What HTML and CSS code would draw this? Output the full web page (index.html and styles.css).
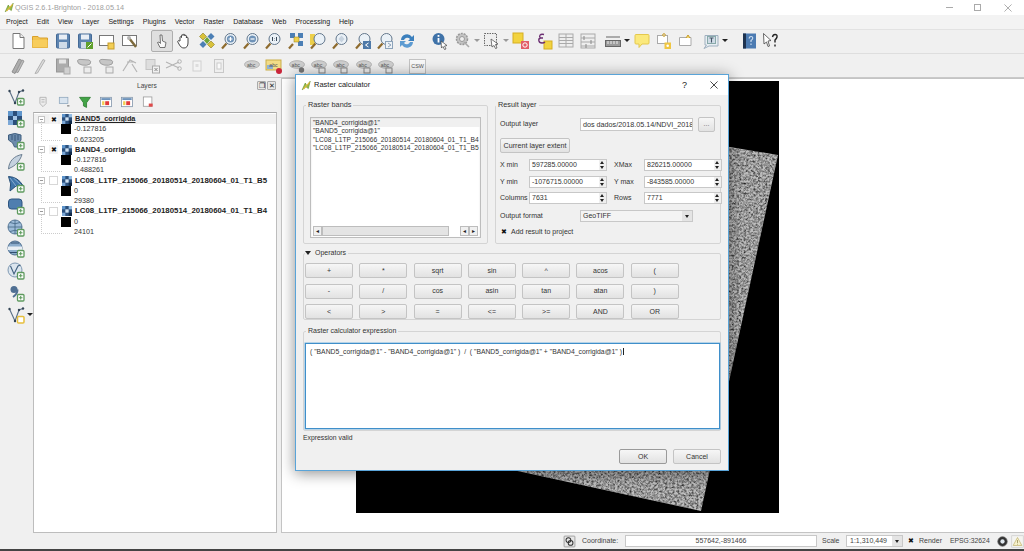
FILE: index.html
```html
<!DOCTYPE html>
<html lang="en">
<head>
<meta charset="utf-8">
<title>QGIS Raster calculator</title>
<link rel="stylesheet" href="styles.css">
</head>
<body>
<svg class="defs" width="0" height="0" aria-hidden="true">
<defs>
<filter id="grain" x="0" y="0" width="100%" height="100%" color-interpolation-filters="sRGB"><feTurbulence type="fractalNoise" baseFrequency="0.42 0.5" numOctaves="3" seed="7"/><feColorMatrix type="matrix" values="0 0 0 0 0  0 0 0 0 0  0 0 0 0 0  1.1 1.1 0 0 -0.9"/><feComposite in2="SourceGraphic" operator="in"/></filter>
<symbol id="qgis" viewBox="0 0 18 18"><path d="M2 16 L7 5 L10 10 L15 2 L12 14 L8 11 Z" fill="#9bc04a" stroke="#5d8a22"/><path d="M4 15 L14 4" stroke="#e2b93b" stroke-width="2"/></symbol>
<symbol id="new" viewBox="0 0 18 18"><path d="M4 1.5H11L15 5.5V16.5H4Z" fill="#fff" stroke="#777"/><path d="M11 1.5V5.5H15" fill="#eee" stroke="#777"/></symbol>
<symbol id="open" viewBox="0 0 18 18"><path d="M1.5 4.5H7L8.5 6H16.5V15.5H1.5Z" fill="#f3c44f" stroke="#d9a02c"/><path d="M1.5 8H16.5V15.5H1.5Z" fill="#f7cd5c"/></symbol>
<symbol id="save" viewBox="0 0 18 18"><rect x="2.5" y="2" width="13" height="14" rx="1" fill="#5d84b0" stroke="#446a96"/><rect x="5" y="2.5" width="8" height="5" fill="#e8eef5"/><rect x="5" y="10" width="8" height="6" fill="#cfdbe8"/></symbol>
<symbol id="saveas" viewBox="0 0 18 18"><use href="#save"/><rect x="10" y="10" width="7" height="7" fill="#5fa02d"/><path d="M11.5 15.5L15.5 11.5" stroke="#fff"/></symbol>
<symbol id="comp" viewBox="0 0 18 18"><rect x="1.5" y="3.5" width="14" height="10" fill="#fff" stroke="#777"/><rect x="10" y="11" width="6" height="6" fill="#f3cf56" stroke="#c69c2a"/></symbol>
<symbol id="compm" viewBox="0 0 18 18"><rect x="1.5" y="3.5" width="14" height="10" fill="#fff" stroke="#777"/><path d="M8 6L15 15" stroke="#7d6a3c" stroke-width="2.4"/><circle cx="8" cy="6" r="2" fill="#b5b5b5"/></symbol>
<symbol id="touch" viewBox="0 0 18 18"><path d="M9 3L9.5 9L13 10.5L12 15.5H7L4.5 10.5L6 10L7.5 11.5L7 3Z" fill="#f8f8f8" stroke="#555" stroke-width=".8"/></symbol>
<symbol id="hand" viewBox="0 0 18 18"><path d="M5 9V5.5C5 4.4 6.5 4.4 6.5 5.5V3.5C6.5 2.4 8 2.4 8 3.5V3C8 2 9.8 2 9.8 3V4C9.8 3 11.4 3 11.4 4V6C11.4 5 13 5 13 6V11C13 14 11.5 16 9 16C6.5 16 5.5 14.5 4.5 13L2.8 10C2.3 9 3.7 8 4.5 9Z" fill="#fff" stroke="#333" stroke-width=".9"/></symbol>
<symbol id="pansel" viewBox="0 0 18 18"><path d="M5 1L8.500 4.500L5 8L1.500 4.500Z" fill="#d9c23a" stroke="#8a7a22" stroke-width=".6"/><path d="M13 1L16.500 4.500L13 8L9.500 4.500Z" fill="#4c7fb5"/><path d="M5 9L8.500 12.500L5 16L1.500 12.500Z" fill="#4c7fb5"/><path d="M13 9L16.500 12.500L13 16L9.500 12.500Z" fill="#d9c23a" stroke="#8a7a22" stroke-width=".6"/><path d="M9 5L12 8.500L9 12L6 8.500Z" fill="#6fa53a"/></symbol>
<symbol id="mag" viewBox="0 0 18 18"><path d="M2 16.500L6.500 11.500" stroke="#8e6b2e" stroke-width="2.200"/><circle cx="10.500" cy="7" r="5.500" fill="#eaf1f7" stroke="#63778c"/></symbol>
<symbol id="zin" viewBox="0 0 18 18"><use href="#mag"/><circle cx="10.500" cy="7" r="3.600" fill="#6f93b8"/><path d="M8.500 7H12.500M10.500 5V9" stroke="#fff" stroke-width="1.200"/></symbol>
<symbol id="zout" viewBox="0 0 18 18"><use href="#mag"/><circle cx="10.500" cy="7" r="3.600" fill="#6f93b8"/><path d="M8.500 7H12.500" stroke="#fff" stroke-width="1.200"/></symbol>
<symbol id="z11" viewBox="0 0 18 18"><use href="#mag"/><path d="M8.500 5V9M12.500 5V9M10.500 6V6.400M10.500 8V8.400" stroke="#234" stroke-width=".9"/></symbol>
<symbol id="zfull" viewBox="0 0 18 18"><path d="M2 16.500L6 12" stroke="#8e6b2e" stroke-width="2.200"/><rect x="3" y="1" width="5" height="5" fill="#4c7fb5"/><rect x="11" y="1" width="5" height="5" fill="#4c7fb5"/><rect x="11" y="9" width="5" height="5" fill="#4c7fb5"/><rect x="7" y="5" width="5" height="5" fill="#f0d24b" stroke="#917a20" stroke-width=".5"/></symbol>
<symbol id="zsel" viewBox="0 0 18 18"><rect x="1" y="2" width="5" height="11" fill="#eccf4b"/><use href="#mag"/></symbol>
<symbol id="zlay" viewBox="0 0 18 18"><use href="#mag"/><path d="M7.500 7L10.500 3.500L13.500 7L10.500 10.500Z" fill="#c7d3df"/></symbol>
<symbol id="zlast" viewBox="0 0 18 18"><use href="#mag"/><rect x="9" y="9" width="8" height="8" fill="#4e79a8"/><path d="M14.500 11L11.500 13L14.500 15" fill="none" stroke="#fff"/></symbol>
<symbol id="znext" viewBox="0 0 18 18"><use href="#mag"/><rect x="9.500" y="9.500" width="7" height="7" fill="#eef2f6" stroke="#8ca3ba"/><path d="M12 11L15 13L12 15" fill="none" stroke="#8ca3ba"/></symbol>
<symbol id="refresh" viewBox="0 0 18 18"><path d="M3 8A6 6 0 0 1 14 5L16 3V9H10L12 7A3.500 3.500 0 0 0 6 8Z" fill="#3c80bd"/><path d="M15 10A6 6 0 0 1 4 13L2 15V9H8L6 11A3.500 3.500 0 0 0 12 10Z" fill="#5d9bd1"/></symbol>
<symbol id="ident" viewBox="0 0 18 18"><circle cx="7.500" cy="7" r="6" fill="#3f72a8"/><rect x="6.600" y="6" width="1.800" height="4.500" fill="#fff"/><rect x="6.600" y="3" width="1.800" height="1.800" fill="#fff"/><path d="M10 9L16 13.500L13.500 14L15 17L13.500 17.500L12 14.500L10.500 16Z" fill="#fff" stroke="#444" stroke-width=".7"/></symbol>
<symbol id="gear" viewBox="0 0 18 18"><circle cx="8" cy="7" r="5.500" fill="#c4c4c4" stroke="#999" stroke-width="1.500" stroke-dasharray="2 1"/><circle cx="8" cy="7" r="2.500" fill="#efefef" stroke="#999"/><path d="M10 10L15 15" stroke="#aaa" stroke-width="1.600"/></symbol>
<symbol id="selbox" viewBox="0 0 18 18"><rect x="1.500" y="1.500" width="12" height="12" fill="#eee" stroke="#666" stroke-dasharray="1.500 1"/><path d="M8 7L15 12L12.500 12.500L14 16L12.500 16.500L11 13.500L9 15Z" fill="#fff" stroke="#444" stroke-width=".7"/></symbol>
<symbol id="desel" viewBox="0 0 18 18"><rect x="1" y="1" width="10" height="10" fill="#f2d33f" stroke="#d6ae22"/><rect x="9" y="9" width="8" height="8" fill="#e25c66"/><circle cx="13" cy="13" r="2.200" fill="none" stroke="#fff"/></symbol>
<symbol id="eps" viewBox="0 0 18 18"><rect x="9" y="9" width="8" height="8" fill="#f2d33f" stroke="#d6ae22"/><path d="M9 2.500C5 1.500 3.500 4 5.500 6C3 6.500 3 11 7 11C8.500 11 9.500 10.500 10 10M5.500 6H8" fill="none" stroke="#6b2e72" stroke-width="1.300"/></symbol>
<symbol id="table" viewBox="0 0 18 18"><rect x="2" y="2" width="14" height="13" fill="#eee" stroke="#aaa"/><path d="M2 5.500H16M9 2V15M2 8.500H16M2 11.500H16" stroke="#aaa"/></symbol>
<symbol id="stats" viewBox="0 0 18 18"><rect x="2" y="2" width="14" height="14" fill="#eee" stroke="#aaa"/><path d="M2 6H16M2 10H16M2 14H16" stroke="#aaa"/><path d="M5 4V8M12 8V12M7 12V16" stroke="#888"/></symbol>
<symbol id="ruler" viewBox="0 0 18 18"><path d="M2 5H16" stroke="#666"/><rect x="1.500" y="8.500" width="15" height="6" fill="#9a9a9a" stroke="#666"/><path d="M4 9V12M7 9V12M10 9V12M13 9V12" stroke="#eee"/></symbol>
<symbol id="tip" viewBox="0 0 18 18"><path d="M2 3.500Q2 2.500 3 2.500H15Q16 2.500 16 3.500V11Q16 12 15 12H9L6 15.500V12H3Q2 12 2 11Z" fill="#fbe97c" stroke="#e4c84d"/></symbol>
<symbol id="anno1" viewBox="0 0 18 18"><rect x="2.500" y="3.500" width="10" height="8" fill="#fff" stroke="#aaa"/><circle cx="9" cy="3" r="1.300" fill="#eee" stroke="#c79d2a"/><rect x="9.500" y="10.500" width="6.500" height="6.500" fill="#efc642"/><circle cx="12.700" cy="13.700" r="1.300" fill="#fff"/></symbol>
<symbol id="anno2" viewBox="0 0 18 18"><path d="M2.500 5.500H14V13.500H2.500Z" fill="#fff" stroke="#aaa"/><path d="M9 6L11 3L13 6" fill="#f3d672" stroke="#c79d2a"/></symbol>
<symbol id="textann" viewBox="0 0 18 18"><path d="M3 3.500H16V14H7L2 16.500L4.500 13H3Z" fill="#e8eef3" stroke="#9fb0bf"/><rect x="5.500" y="4.500" width="8" height="7" fill="#cfdbe6" stroke="#8aa"/><path d="M7.500 6H11.500M9.500 6V10.500" stroke="#456" stroke-width="1.100"/></symbol>
<symbol id="help" viewBox="0 0 18 18"><rect x="3" y="1.500" width="13" height="15" fill="#4c7bb2"/><rect x="3" y="1.500" width="3" height="15" fill="#1e3350"/><path d="M9 6.500Q9.500 4.500 11 4.500Q13 4.500 12.700 6.500Q12.500 7.500 11 8.500V10M11 11.500V13" fill="none" stroke="#cfe0f3" stroke-width="1.100"/></symbol>
<symbol id="whats" viewBox="0 0 18 18"><path d="M1.500 1.500L9 8.500L6 9L7.500 14L6 14.500L4.500 10L2 12Z" fill="#fff" stroke="#444" stroke-width=".8"/><path d="M10.500 5Q11 2.500 13 2.500Q15.500 2.500 15 5Q14.700 6.500 13 8V10.500M13 12.500V14.500" fill="none" stroke="#222" stroke-width="1.400"/></symbol>
<symbol id="pencils" viewBox="0 0 18 18"><path d="M3 15L10 2L13 3.500L6 16.500Z" fill="#adadad" stroke="#8f8f8f"/><path d="M7 15L13 3L15 4L9 15.500Z" fill="#bdbdbd" stroke="#999"/></symbol>
<symbol id="pencil" viewBox="0 0 18 18"><path d="M4 16.500L12 2.500L14 3.500L6.500 16Z" fill="#dcdcdc" stroke="#b2b2b2"/></symbol>
<symbol id="gsave" viewBox="0 0 18 18"><rect x="2.500" y="2" width="12" height="13" fill="#acacac" stroke="#979797"/><rect x="5" y="2.500" width="7" height="4" fill="#e4e4e4"/><rect x="10" y="10" width="6" height="7" fill="#d0d0d0" stroke="#aaa"/></symbol>
<symbol id="cloud1" viewBox="0 0 18 18"><path d="M1.500 4Q1.500 2 6 2.500L13 3Q16 4 14 7Q11 9 6 8Q1.500 7 1.500 4Z" fill="#c6c6c6" stroke="#a0a0a0"/><rect x="8" y="10" width="7" height="6" fill="#ececec" stroke="#aaa"/></symbol>
<symbol id="wrench" viewBox="0 0 18 18"><path d="M2 14L9 3L15 6M6 5H13M11 7L16 15" fill="none" stroke="#b5b5b5" stroke-width="1.200"/></symbol>
<symbol id="gdel" viewBox="0 0 18 18"><rect x="3" y="2.500" width="9" height="10" fill="#dedede" stroke="#c4c4c4"/><rect x="9.500" y="9" width="7" height="7" fill="#f1f1f1" stroke="#aaa"/><path d="M11.500 11L14.500 14M14.500 11L11.500 14" stroke="#888"/></symbol>
<symbol id="scis" viewBox="0 0 18 18"><path d="M1 5L14 11M1 11L14 5" stroke="#b3b3b3" stroke-width="1.100"/><circle cx="14.500" cy="4.500" r="1.800" fill="none" stroke="#b3b3b3"/><circle cx="14.500" cy="11.500" r="1.800" fill="none" stroke="#b3b3b3"/></symbol>
<symbol id="copy" viewBox="0 0 18 18"><rect x="5" y="4" width="8" height="10" fill="#f3f3f3" stroke="#d0d0d0"/><rect x="7.500" y="7" width="3" height="3" fill="#ddd"/></symbol>
<symbol id="paste" viewBox="0 0 18 18"><rect x="4.500" y="2.500" width="9" height="13" fill="#efefef" stroke="#c8c8c8"/><rect x="7" y="6" width="4" height="6" fill="#fafafa" stroke="#ccc"/></symbol>
<symbol id="abc" viewBox="0 0 18 18"><ellipse cx="9" cy="7.500" rx="7.500" ry="3.800" fill="#cfcfcf" stroke="#b5b5b5"/></symbol>
<symbol id="abcy" viewBox="0 0 18 18"><rect x="1" y="3" width="15" height="10" fill="#f2dc87" stroke="#c9ad48"/><rect x="2" y="8" width="6" height="4" fill="#8fb2d3"/><circle cx="14" cy="14" r="3" fill="#c9253a"/></symbol>
<symbol id="abcg" viewBox="0 0 18 18"><use href="#abc"/><circle cx="13.500" cy="13" r="2.700" fill="#777"/></symbol>
<symbol id="abcb" viewBox="0 0 18 18"><use href="#abc"/><rect x="9" y="11" width="6" height="5" fill="#eee" stroke="#888"/></symbol>
<symbol id="vedit" viewBox="0 0 18 18"><path d="M2.500 3L8 15L12 4L16 2.500" fill="none" stroke="#5a6f86" stroke-width="1.100"/><circle cx="2.500" cy="3" r="1.200" fill="#345"/><circle cx="8" cy="15" r="1.200" fill="#345"/><circle cx="12" cy="4" r="1.200" fill="#345"/><circle cx="16" cy="2.500" r="1.200" fill="#345"/></symbol>
<symbol id="plus" viewBox="0 0 18 18"><rect x="10.500" y="10.500" width="6.500" height="6.500" rx="1" fill="#fff" stroke="#5e9a5e" stroke-width="1.300"/><path d="M12 13.700H15.500M13.700 12V15.500" stroke="#5e9a5e" stroke-width="1.100"/></symbol>
<symbol id="lvec" viewBox="0 0 18 18"><use href="#vedit"/><use href="#plus"/></symbol>
<symbol id="lras" viewBox="0 0 18 18"><rect x="1" y="1" width="14" height="14" fill="#2b4f7b"/><rect x="1" y="1" width="5" height="5" fill="#5f95cb"/><rect x="10" y="1" width="5" height="5" fill="#5f95cb"/><rect x="6" y="6" width="4" height="4" fill="#a8c8e8"/><rect x="1" y="10" width="5" height="5" fill="#7ba7d6"/><rect x="10" y="10" width="5" height="5" fill="#122a48"/><use href="#plus"/></symbol>
<symbol id="lpg" viewBox="0 0 18 18"><path d="M1.500 3Q8 0 14 3V8Q12 10 10.500 15H7.500Q6.500 10 1.500 8Z" fill="#6c8bab" stroke="#3f5e7f"/><path d="M5 3V8M8 3V9M11 3V8" stroke="#2f4d6e" stroke-width=".8"/><use href="#plus"/></symbol>
<symbol id="lsp" viewBox="0 0 18 18"><path d="M1.500 16C2 8 7 3 15 1.500C13 8 8 13 3 15Z" fill="#c5d2df" stroke="#6c7f92"/><use href="#plus"/></symbol>
<symbol id="lms" viewBox="0 0 18 18"><path d="M1.500 1.500Q11 2 15.500 10L9 11L3 16Q5 9 1.500 1.500Z" fill="#3f75aa" stroke="#254d77"/><path d="M3 3L9 11M6.500 3L14 10" stroke="#a7c4df" stroke-width=".7"/><use href="#plus"/></symbol>
<symbol id="lmem" viewBox="0 0 18 18"><path d="M1.500 5Q1.500 2 4.500 2H12Q15 2 15 5V9Q15 12 12 12H4.500Q1.500 12 1.500 9Z" fill="#4f7eaf" stroke="#2e5580"/><use href="#plus"/></symbol>
<symbol id="lglobe" viewBox="0 0 18 18"><circle cx="8" cy="8" r="7" fill="#9dbbd8" stroke="#587897"/><path d="M1 8H15M8 1V15M3 3.500Q8 6 13 3.500M3 12.500Q8 10 13 12.500" fill="none" stroke="#416584" stroke-width=".8"/><use href="#plus"/></symbol>
<symbol id="lglobe2" viewBox="0 0 18 18"><circle cx="8" cy="8" r="7" fill="#8baccc" stroke="#4a6b8c"/><rect x="1" y="6.500" width="14" height="3.500" fill="#e8eef4"/><path d="M4 3H12M3 12.500H13" stroke="#2f4d6e"/><use href="#plus"/></symbol>
<symbol id="lwfs" viewBox="0 0 18 18"><circle cx="8" cy="8" r="7" fill="#dbe5ee" stroke="#7f99b2"/><path d="M3.500 4L7 12L11 4L13.500 3" fill="none" stroke="#40607f" stroke-width="1.100"/><use href="#plus"/></symbol>
<symbol id="lquote" viewBox="0 0 18 18"><circle cx="7" cy="5.500" r="3.500" fill="#4f6f93"/><path d="M10.500 5.500Q10.500 10 6 13" fill="none" stroke="#4f6f93" stroke-width="2"/><use href="#plus"/></symbol>
<symbol id="lnew" viewBox="0 0 18 18"><use href="#vedit"/><rect x="10.500" y="10.500" width="6.500" height="6.500" rx="1" fill="#fff" stroke="#e6bf3d" stroke-width="1.500"/></symbol>
<symbol id="paddle" viewBox="0 0 18 18"><path d="M5 3H13V11L9 15L5 11Z" fill="#ececec" stroke="#aaa"/><path d="M7 6H11M7 9H11" stroke="#aaa"/></symbol>
<symbol id="lstyle" viewBox="0 0 18 18"><rect x="3" y="3" width="11" height="8" fill="#d9e4ef" stroke="#8fa7bd"/><path d="M13 14L16 14" stroke="#333"/></symbol>
<symbol id="filter" viewBox="0 0 18 18"><path d="M2 3H16L11 10V16L7 14V10Z" fill="#43a447" stroke="#2a7a2e"/></symbol>
<symbol id="lexp" viewBox="0 0 18 18"><rect x="2" y="3" width="14" height="12" fill="#fff" stroke="#7f93a8"/><rect x="3" y="4" width="12" height="2.500" fill="#6d93bb"/><rect x="8" y="8" width="5" height="5" fill="#e23a3a"/><rect x="4" y="8" width="3" height="5" fill="#f2cc52"/></symbol>
<symbol id="lrem" viewBox="0 0 18 18"><rect x="3" y="2.500" width="11" height="12" fill="#fff" stroke="#999"/><rect x="10" y="11" width="5" height="4" fill="#e04b4b"/></symbol>
<symbol id="cog" viewBox="0 0 18 18"><circle cx="9" cy="9" r="6.500" fill="#333" stroke="#555"/><circle cx="9" cy="9" r="3" fill="#dfe7ee"/></symbol>
<symbol id="warn" viewBox="0 0 18 18"><rect x="1" y="1" width="16" height="16" fill="#f4f4f0" stroke="#ccc"/><path d="M9 3.500L15 14.500H3Z" fill="#f6f1cd" stroke="#c2b36b"/><path d="M9 7V11M9 12.200V13.200" stroke="#8a7f45"/></symbol>
<symbol id="cursor" viewBox="0 0 18 18"><rect x="1.500" y="1.500" width="15" height="15" rx="1" fill="#e7e7e7" stroke="#888"/><circle cx="7.500" cy="7" r="3.300" fill="none" stroke="#333" stroke-width="1.400"/><circle cx="10.500" cy="11" r="3.300" fill="none" stroke="#333" stroke-width="1.400"/></symbol>
<symbol id="lthumb" viewBox="0 0 18 18"><rect width="18" height="18" fill="#2b4f7b"/><rect width="6" height="6" fill="#5f95cb"/><rect x="12" width="6" height="6" fill="#94bde3"/><rect x="6" y="6" width="6" height="6" fill="#cfe2f3"/><rect y="12" width="6" height="6" fill="#7ba7d6"/><rect x="12" y="12" width="6" height="6" fill="#122a48"/></symbol>
</defs>
</svg>

<div class="app">
  <header class="titlebar">
    <svg class="ico title-ico"><use href="#qgis"/></svg>
    <span class="title-text">QGIS 2.6.1-Brighton - 2018.05.14</span>
    <div class="winctl">
      <span class="win-min"></span>
      <span class="win-max"></span>
      <svg class="win-x" viewBox="0 0 9 9"><path d="M.5.5L8.500 8.500M8.500.5L.5 8.500" stroke="#a5a5a5"/></svg>
    </div>
  </header>

  <nav class="menubar">
    <span>Project</span><span>Edit</span><span>View</span><span>Layer</span><span>Settings</span><span>Plugins</span><span>Vector</span><span>Raster</span><span>Database</span><span>Web</span><span>Processing</span><span>Help</span>
  </nav>

  <div class="toolbar">
    <span class="tb"><svg class="ico"><use href="#new"/></svg></span>
    <span class="tb"><svg class="ico"><use href="#open"/></svg></span>
    <span class="tb"><svg class="ico"><use href="#save"/></svg></span>
    <span class="tb"><svg class="ico"><use href="#saveas"/></svg></span>
    <span class="tb"><svg class="ico"><use href="#comp"/></svg></span>
    <span class="tb"><svg class="ico"><use href="#compm"/></svg></span>
    <span class="sp10"></span>
    <span class="tb active"><svg class="ico"><use href="#touch"/></svg></span>
    <span class="tb"><svg class="ico"><use href="#hand"/></svg></span>
    <span class="tb"><svg class="ico"><use href="#pansel"/></svg></span>
    <span class="tb"><svg class="ico"><use href="#zin"/></svg></span>
    <span class="tb"><svg class="ico"><use href="#zout"/></svg></span>
    <span class="tb"><svg class="ico"><use href="#z11"/></svg></span>
    <span class="tb"><svg class="ico"><use href="#zfull"/></svg></span>
    <span class="tb"><svg class="ico"><use href="#zsel"/></svg></span>
    <span class="tb"><svg class="ico"><use href="#zlay"/></svg></span>
    <span class="tb"><svg class="ico"><use href="#zlast"/></svg></span>
    <span class="tb"><svg class="ico"><use href="#znext"/></svg></span>
    <span class="tb"><svg class="ico"><use href="#refresh"/></svg></span>
    <span class="sep"></span>
    <span class="tb"><svg class="ico"><use href="#ident"/></svg></span>
    <span class="tb"><svg class="ico"><use href="#gear"/></svg></span><span class="arrow gray"></span>
    <span class="tb"><svg class="ico"><use href="#selbox"/></svg></span><span class="arrow gray"></span>
    <span class="tb"><svg class="ico"><use href="#desel"/></svg></span>
    <span class="tb"><svg class="ico"><use href="#eps"/></svg></span>
    <span class="tb"><svg class="ico"><use href="#table"/></svg></span>
    <span class="tb"><svg class="ico"><use href="#stats"/></svg></span>
    <span class="sp2"></span>
    <span class="tb"><svg class="ico"><use href="#ruler"/></svg></span><span class="arrow"></span>
    <span class="tb"><svg class="ico"><use href="#tip"/></svg></span>
    <span class="tb"><svg class="ico"><use href="#anno1"/></svg></span>
    <span class="tb"><svg class="ico"><use href="#anno2"/></svg></span>
    <span class="sp2"></span>
    <span class="tb"><svg class="ico"><use href="#textann"/></svg></span><span class="arrow"></span>
    <span class="sep sep-short"></span>
    <span class="tb"><svg class="ico"><use href="#help"/></svg></span>
    <span class="tb"><svg class="ico"><use href="#whats"/></svg></span>
  </div>

  <div class="toolbar toolbar-b">
    <span class="tb"><svg class="ico"><use href="#pencils"/></svg></span>
    <span class="tb"><svg class="ico"><use href="#pencil"/></svg></span>
    <span class="tb"><svg class="ico"><use href="#gsave"/></svg></span>
    <span class="tb"><svg class="ico"><use href="#cloud1"/></svg></span>
    <span class="tb"><svg class="ico"><use href="#cloud1"/></svg></span>
    <span class="tb"><svg class="ico"><use href="#wrench"/></svg></span>
    <span class="tb"><svg class="ico"><use href="#gdel"/></svg></span>
    <span class="tb"><svg class="ico"><use href="#scis"/></svg></span>
    <span class="tb"><svg class="ico"><use href="#copy"/></svg></span>
    <span class="tb"><svg class="ico"><use href="#paste"/></svg></span>
    <span class="sep"></span>
    <span class="tb lbl"><svg class="ico"><use href="#abc"/></svg><em>abc</em></span>
    <span class="tb lbl"><svg class="ico"><use href="#abcy"/></svg><em>abc</em></span>
    <span class="tb lbl"><svg class="ico"><use href="#abcg"/></svg><em>abc</em></span>
    <span class="tb lbl"><svg class="ico"><use href="#abcb"/></svg><em>abc</em></span>
    <span class="tb lbl"><svg class="ico"><use href="#abcb"/></svg><em>abc</em></span>
    <span class="tb lbl"><svg class="ico"><use href="#abcb"/></svg><em>abc</em></span>
    <span class="tb lbl"><svg class="ico"><use href="#abcb"/></svg><em>abc</em></span>
    <span class="sep"></span>
    <span class="csw">CSW</span>
  </div>

  <main class="workspace">
    <aside class="lefttools">
      <svg class="ico lt"><use href="#lvec"/></svg>
      <svg class="ico lt"><use href="#lras"/></svg>
      <svg class="ico lt"><use href="#lpg"/></svg>
      <svg class="ico lt"><use href="#lsp"/></svg>
      <svg class="ico lt"><use href="#lms"/></svg>
      <svg class="ico lt"><use href="#lmem"/></svg>
      <svg class="ico lt"><use href="#lglobe"/></svg>
      <svg class="ico lt"><use href="#lglobe2"/></svg>
      <svg class="ico lt"><use href="#lwfs"/></svg>
      <svg class="ico lt"><use href="#lquote"/></svg>
      <div class="lt-last"><svg class="ico lt"><use href="#lnew"/></svg><span class="arrow"></span></div>
    </aside>

    <section class="layers">
      <div class="layers-head">
        <span class="layers-title">Layers</span>
        <span class="dockbtn">&#10064;</span><span class="dockbtn">&#10005;</span>
      </div>
      <div class="layers-tools">
        <svg class="ico lti"><use href="#paddle"/></svg>
        <svg class="ico lti"><use href="#lstyle"/></svg>
        <svg class="ico lti"><use href="#filter"/></svg>
        <svg class="ico lti"><use href="#lexp"/></svg>
        <svg class="ico lti"><use href="#lexp"/></svg>
        <svg class="ico lti"><use href="#lrem"/></svg>
      </div>
      <div class="tree">
        <div class="layer current">
          <div class="lrow"><i class="exp"></i><i class="chk on">&#10006;</i><svg class="thumb"><use href="#lthumb"/></svg><b class="uline">BAND5_corrigida</b></div>
          <div class="lleg"><i class="swatch"></i><div class="vals"><span>-0.127816</span><span>0.623205</span></div></div>
        </div>
        <div class="layer">
          <div class="lrow"><i class="exp"></i><i class="chk on">&#10006;</i><svg class="thumb"><use href="#lthumb"/></svg><b>BAND4_corrigida</b></div>
          <div class="lleg"><i class="swatch"></i><div class="vals"><span>-0.127816</span><span>0.488261</span></div></div>
        </div>
        <div class="layer">
          <div class="lrow"><i class="exp"></i><i class="chk"></i><svg class="thumb"><use href="#lthumb"/></svg><b class="long">LC08_L1TP_215066_20180514_20180604_01_T1_B5</b></div>
          <div class="lleg"><i class="swatch"></i><div class="vals"><span>0</span><span>29380</span></div></div>
        </div>
        <div class="layer">
          <div class="lrow"><i class="exp"></i><i class="chk"></i><svg class="thumb"><use href="#lthumb"/></svg><b class="long">LC08_L1TP_215066_20180514_20180604_01_T1_B4</b></div>
          <div class="lleg"><i class="swatch"></i><div class="vals"><span>0</span><span>24101</span></div></div>
        </div>
      </div>
    </section>

    <section class="map">
      <svg class="raster" viewBox="0 0 423 432">
        <rect width="423" height="432" fill="#000"/>
        <polygon points="0,8 374,66 422,74 345,430 166,391 0,355" fill="#bdbdbd"/>
        <polygon points="0,8 374,66 422,74 345,430 166,391 0,355" fill="#111" filter="url(#grain)"/>
      </svg>
    </section>
  </main>

  <footer class="statusbar">
    <svg class="ico st-ico"><use href="#cursor"/></svg>
    <span class="st-coord">Coordinate:</span>
    <span class="st-input">557642,-891466</span>
    <span class="st-scale">Scale</span>
    <span class="st-combo"><span>1:1,310,449</span><i class="arrow-box"></i></span>
    <i class="st-chk">&#10006;</i>
    <span class="st-render">Render</span>
    <span class="st-epsg">EPSG:32624</span>
    <svg class="ico st-ico"><use href="#cog"/></svg>
    <svg class="ico st-ico st-warn"><use href="#warn"/></svg>
  </footer>

  <div class="dialog" role="dialog" aria-label="Raster calculator">
    <div class="dlg-title">
      <svg class="ico dlg-ico"><use href="#qgis"/></svg>
      <span class="dlg-name">Raster calculator</span>
      <span class="dlg-q">?</span>
      <svg class="dlg-x" viewBox="0 0 9 9"><path d="M.5.5L8.500 8.500M8.500.5L.5 8.500" stroke="#333"/></svg>
    </div>
    <div class="dlg-body">
      <div class="dlg-top">
        <fieldset class="group g-bands">
          <legend>Raster bands</legend>
          <div class="bands">
            <div class="bands-list">
              <span class="sel">"BAND4_corrigida@1"</span>
              <span>"BAND5_corrigida@1"</span>
              <span>"LC08_L1TP_215066_20180514_20180604_01_T1_B4</span>
              <span>"LC08_L1TP_215066_20180514_20180604_01_T1_B5</span>
            </div>
            <div class="hscroll">
              <i class="sb-btn">&#9666;</i>
              <i class="sb-thumb"></i>
              <i class="sb-btn">&#9666;</i><i class="sb-btn">&#9656;</i>
            </div>
          </div>
        </fieldset>
        <fieldset class="group g-result">
          <legend>Result layer</legend>
          <div class="r-row r-out">
            <span class="r-wide">Output layer</span>
            <span class="r-input">dos dados/2018.05.14/NDVI_2018</span>
            <span class="btn r-dots">...</span>
          </div>
          <span class="btn r-extent">Current layer extent</span>
          <div class="r-row r-coords">
            <span class="r-lab">X min</span><span class="spin"><span>597285.00000</span><i></i></span>
            <span class="r-lab2">XMax</span><span class="spin spin2"><span>826215.00000</span><i></i></span>
          </div>
          <div class="r-row r-coords">
            <span class="r-lab">Y min</span><span class="spin"><span>-1076715.00000</span><i></i></span>
            <span class="r-lab2">Y max</span><span class="spin spin2"><span>-843585.00000</span><i></i></span>
          </div>
          <div class="r-row r-coords r-tight">
            <span class="r-lab">Columns</span><span class="spin"><span>7631</span><i></i></span>
            <span class="r-lab2">Rows</span><span class="spin spin2"><span>7771</span><i></i></span>
          </div>
          <div class="r-row r-format">
            <span class="r-wide">Output format</span>
            <span class="r-combo"><span>GeoTIFF</span><i class="arrow-box"></i></span>
          </div>
          <div class="r-row r-add"><i class="r-chk">&#10006;</i><span>Add result to project</span></div>
        </fieldset>
      </div>

      <fieldset class="group g-ops">
        <legend><i class="tri"></i>Operators</legend>
        <div class="ops">
          <span class="btn">+</span><span class="btn">*</span><span class="btn">sqrt</span><span class="btn">sin</span><span class="btn">^</span><span class="btn">acos</span><span class="btn">(</span>
          <span class="btn">-</span><span class="btn">/</span><span class="btn">cos</span><span class="btn">asin</span><span class="btn">tan</span><span class="btn">atan</span><span class="btn">)</span>
          <span class="btn">&lt;</span><span class="btn">&gt;</span><span class="btn">=</span><span class="btn">&lt;=</span><span class="btn">&gt;=</span><span class="btn">AND</span><span class="btn">OR</span>
        </div>
      </fieldset>

      <fieldset class="group g-expr">
        <legend>Raster calculator expression</legend>
        <div class="expr"><span class="caret">( "BAND5_corrigida@1" - "BAND4_corrigida@1" )  /  ( "BAND5_corrigida@1" + "BAND4_corrigida@1" )</span></div>
      </fieldset>

      <div class="valid">Expression valid</div>
      <div class="dlg-actions">
        <span class="btn act focus">OK</span>
        <span class="btn act">Cancel</span>
      </div>
    </div>
  </div>
</div>
</body>
</html>
```
FILE: styles.css
```css
* { box-sizing: border-box; }
html, body { margin: 0; padding: 0; }
body { width: 1024px; height: 551px; overflow: hidden; background: #f0f0f0; font: 7px/10px "Liberation Sans", Arial, sans-serif; color: #333; }
i, em { font-style: normal; }
.defs { position: absolute; }
.app { position: relative; width: 1024px; height: 551px; display: flex; flex-direction: column; overflow: hidden; }
.ico { width: 18px; height: 18px; display: block; flex: none; }

.titlebar { height: 15px; flex: none; background: #fff; display: flex; align-items: center; padding-left: 4px; }
.title-ico { width: 11px; height: 11px; }
.title-text { margin-left: 0; color: #a0a0a0; font-size: 7.3px; }
.winctl { margin-left: auto; display: flex; align-items: center; }
.win-min { width: 7px; height: 1px; background: #aaa; margin-right: 21px; }
.win-max { width: 7px; height: 7px; border: 1px solid #aaa; margin-right: 23px; }
.win-x { width: 8px; height: 8px; margin-right: 12px; }

.menubar { height: 14px; flex: none; background: #f3f3f3; display: flex; align-items: center; gap: 9px; padding-left: 6px; color: #222; }

.toolbar { height: 25px; flex: none; display: flex; align-items: center; padding: 0 0 2px 7px; background: #f0f0f0; border-top: 1px solid #e2e2e2; border-bottom: 1px solid #dedede; background-image: radial-gradient(#bdbdbd 30%, transparent 35%); background-size: 2px 2px; background-repeat: repeat-y; background-position: 3px 0; }
.toolbar-b { height: 24px; padding: 1px 0 0 7px; border-top: 0; border-bottom: 1px solid #c9c9c9; }
.tb { width: 22.3px; height: 22px; flex: none; display: flex; align-items: center; justify-content: center; position: relative; }
.tb.active { height: 22px; background: #dfdfdf; border: 1px solid #aeaeae; border-radius: 2px; }
.sp10 { width: 10px; flex: none; }
.sp2 { width: 2px; flex: none; }
.sep { width: 11px; height: 20px; flex: none; background-image: radial-gradient(#c4c4c4 30%, transparent 35%); background-size: 2px 2px; background-repeat: repeat-y; background-position: center; }
.sep-short { width: 9px; }
.arrow { width: 7px; height: 10px; flex: none; position: relative; }
.arrow::after { content: ""; position: absolute; left: 0; top: 3px; border: 3px solid transparent; border-top: 3px solid #222; border-bottom: 0; }
.arrow.gray::after { border-top-color: #999; }
.lbl em { position: absolute; left: 6px; top: 4.5px; font-size: 5.2px; color: #555; }
.csw { width: 17px; height: 15px; margin-left: 1px; background: #f8f8f8; border: 1px solid #c3c3c3; font-size: 5.4px; line-height: 13px; text-align: center; color: #555; }

.workspace { flex: 1; min-height: 0; display: flex; }
.lefttools { width: 33px; flex: none; display: flex; flex-direction: column; align-items: flex-start; padding: 10px 0 0 7px; gap: 3.75px; }
.lt-last { display: flex; align-items: center; position: relative; }
.lt-last .arrow { position: absolute; left: 20px; top: 4px; }

.layers { width: 244px; flex: none; display: flex; flex-direction: column; }
.layers-head { height: 14px; flex: none; display: flex; align-items: center; position: relative; justify-content: flex-end; gap: 1px; padding-right: 1px; }
.layers-title { position: absolute; left: 104px; top: 3px; font-size: 6.6px; color: #444; }
.dockbtn { width: 9px; height: 9px; background: #e6e6e6; border: 1px solid #aaa; border-radius: 1px; font-size: 7px; line-height: 7px; text-align: center; color: #222; }
.layers-tools { height: 20px; flex: none; display: flex; align-items: center; padding-left: 3px; }
.lti { width: 14px; height: 14px; margin-right: 7px; }
.tree { flex: 1; margin-left: 0; background: #fff; border: 1px solid #bdbdbd; border-top-color: #aaa; padding-top: 1px; color: #333; }
.layer { height: 30.75px; position: relative; }
.lrow { height: 10.25px; display: flex; align-items: center; padding-left: 4px; position: relative; }
.current .lrow { background: #f0f0f0; }
.lrow b { color: #222; font-weight: 700; margin-left: 3px; font-size: 7.3px; white-space: nowrap; }
.lrow b.uline { text-decoration: underline; }
.lrow b.long { font-size: 7.82px; }
.exp { width: 7px; height: 7px; border: 1px solid #c5c5c5; position: relative; flex: none; background: #fff; }
.exp::after { content: ""; position: absolute; left: 1px; top: 2px; width: 3px; height: 1px; background: #999; }
.chk { width: 9px; height: 9px; margin-left: 4px; border: 1px solid #d7d7d7; background: #fff; flex: none; font-size: 7px; line-height: 7px; text-align: center; color: #111; }
.chk.on { border-color: transparent; background: #f4f4f4; }
.thumb { width: 10px; height: 10px; margin-left: 4px; flex: none; }
.lleg { display: flex; padding-left: 27px; height: 20.5px; position: relative; }
.lleg::before { content: ""; position: absolute; left: 7px; top: -3px; width: 20px; height: 19px; border-left: 1px dotted #ccc; border-bottom: 1px dotted #ccc; }
.swatch { width: 10px; height: 10px; background: #000; flex: none; position: relative; z-index: 1; }
.vals { display: flex; flex-direction: column; margin-left: 3px; font-size: 7.2px; }
.vals span { height: 10.25px; line-height: 10.25px; }

.map { flex: 1; margin-left: 4px; background: #fff; border: 1px solid #c4c4c4; border-right: 0; position: relative; }
.raster { position: absolute; left: 74px; top: 2px; width: 423px; height: 432px; }

.statusbar { height: 18px; flex: none; display: flex; align-items: center; border-bottom: 2px solid #444; padding-left: 563px; color: #444; }
.st-ico { width: 13px; height: 13px; }
.st-coord { margin-left: 6px; width: 43px; }
.st-input { width: 192px; height: 12px; background: #fff; border: 1px solid #c8c8c8; text-align: center; line-height: 10px; }
.st-scale { margin-left: 5px; width: 24px; }
.st-combo { width: 57px; height: 12px; background: #fff; border: 1px solid #c8c8c8; display: flex; align-items: center; padding-left: 3px; justify-content: space-between; }
.arrow-box { width: 10px; height: 100%; flex: none; background: #e4e4e4; position: relative; }
.arrow-box::after { content: ""; position: absolute; left: 2.500px; top: 3.500px; border: 2.500px solid transparent; border-top: 3px solid #222; border-bottom: 0; }
.st-chk { margin-left: 5px; width: 9px; font-size: 7px; color: #111; }
.st-render { margin-left: 2px; width: 31px; }
.st-epsg { width: 46px; font-size: 6.8px; }
.st-warn { margin-left: 2px; }

.dialog { position: absolute; left: 295px; top: 74px; width: 434px; height: 397px; background: #f0f0f0; border: 1px solid #5aa4d8; box-shadow: 0 2px 14px rgba(0,0,0,.45); display: flex; flex-direction: column; }
.dlg-title { height: 20px; flex: none; background: #fff; display: flex; align-items: center; padding-left: 5px; }
.dlg-ico { width: 11px; height: 11px; }
.dlg-name { margin-left: 2px; font-size: 7.5px; color: #222; }
.dlg-q { margin-left: auto; font-size: 9px; color: #222; }
.dlg-x { width: 8px; height: 8px; margin: 0 10px 0 23px; }
.dlg-body { flex: 1; padding: 5px 7px 0; display: flex; flex-direction: column; }
.dlg-top { display: flex; gap: 7px; height: 144px; flex: none; }

.group { margin: 0; padding: 0; min-width: 0; border: 1px solid #d4d4d4; border-radius: 2px; flex: none; }
.group legend { padding: 0 2px; line-height: 10px; color: #333; }
.g-bands { width: 185px; height: 144px; padding: 7px 6px 0; }
.g-bands legend, .g-result legend { margin-left: -4px; font-size: 7.3px; }
.g-result { width: 226px; height: 144px; padding: 7px 5px 0 4px; }
.bands { width: 171px; height: 121px; background: #fff; border: 1px solid #bdbdbd; display: flex; flex-direction: column; box-shadow: inset 0 1px 2px rgba(0,0,0,.12); }
.bands-list { flex: 1; padding: 1px 0 0 2px; display: flex; flex-direction: column; overflow: hidden; }
.bands-list span { height: 8.4px; line-height: 8.4px; white-space: nowrap; font-size: 6.7px; }
.bands-list .sel { background: #f0f0f0; margin-left: -2px; padding-left: 2px; }
.hscroll { height: 11px; flex: none; display: flex; align-items: center; padding: 0 2px 1px; }
.sb-btn { width: 9px; height: 10px; background: #f0f0f0; border: 1px solid #bdbdbd; font-size: 6px; line-height: 8px; text-align: center; color: #222; flex: none; }
.sb-thumb { width: 127px; height: 10px; background: #e4e4e4; border: 1px solid #bdbdbd; margin-right: 11px; flex: none; }

.btn { display: flex; align-items: center; justify-content: center; background: linear-gradient(#f6f6f6, #e2e2e2); border: 1px solid #c4c4c4; border-radius: 2px; color: #333; }
.r-row { display: flex; align-items: center; }
.r-out { height: 14px; }
.r-wide { width: 80px; flex: none; }
.r-input { width: 113px; height: 13px; flex: none; background: #fff; border: 1px solid #c8c8c8; padding-left: 2px; line-height: 11px; white-space: nowrap; overflow: hidden; font-size: 7.2px; }
.r-dots { width: 17px; height: 15px; margin-left: 5px; flex: none; color: #666; }
.r-extent { width: 70px; height: 15px; margin-top: 7px; white-space: nowrap; font-size: 7.2px; }
.r-coords { height: 12px; margin-top: 6px; }
.r-tight { margin-top: 4px; }
.r-coords + .r-coords:not(.r-tight) { margin-top: 5px; }
.r-lab { width: 29px; flex: none; }
.r-lab2 { width: 30px; margin-left: 7px; text-align: left; flex: none; padding-left: 0; }
.spin { width: 78px; height: 12px; flex: none; background: #fff; border: 1px solid #c8c8c8; display: flex; align-items: center; justify-content: space-between; padding-left: 2px; }
.spin i { width: 7px; height: 10px; flex: none; background: #efefef; position: relative; }
.spin i::before { content: ""; position: absolute; left: 1px; top: 1px; border: 2.500px solid transparent; border-bottom: 3px solid #222; border-top: 0; }
.spin i::after { content: ""; position: absolute; left: 1px; bottom: 1px; border: 2.500px solid transparent; border-top: 3px solid #222; border-bottom: 0; }
.r-format { height: 12px; margin-top: 6px; }
.r-combo { width: 113px; height: 12px; flex: none; background: #f4f4f4; border: 1px solid #c8c8c8; display: flex; align-items: center; justify-content: space-between; padding-left: 2px; }
.r-add { height: 10px; margin-top: 5px; padding-left: 1px; }
.r-chk { width: 8px; margin-right: 2px; font-size: 7px; color: #111; }

.g-ops { width: 418px; height: 72px; margin-top: 4px; padding: 5px 0 0 1px; }
.g-ops legend { display: flex; align-items: center; padding: 0 2px 0 0; }
.tri { width: 0; height: 0; border: 3px solid transparent; border-top: 4px solid #222; border-bottom: 0; margin-right: 4px; }
.ops { display: grid; grid-template-columns: repeat(7, 48px); grid-auto-rows: 15px; column-gap: 6.3px; row-gap: 5.5px; }
.g-expr { width: 418px; height: 105px; margin-top: 6px; padding: 7px 0 0 1px; }
.g-expr legend { margin-left: 1px; }
.expr { width: 415px; height: 86px; background: #fff; border: 1px solid #3f8fca; box-shadow: 0 0 0 .5px #7db6de; padding: 3px 4px; font-size: 6.8px; white-space: pre; color: #333; }
.caret { border-right: 1px solid #222; padding-right: 1px; }
.valid { height: 10px; margin-top: 2px; font-size: 6.8px; }
.dlg-actions { display: flex; justify-content: flex-end; gap: 6px; margin-top: 6px; }
.act { width: 48px; height: 15px; }
.focus { border-color: #9a9a9a; }
```
